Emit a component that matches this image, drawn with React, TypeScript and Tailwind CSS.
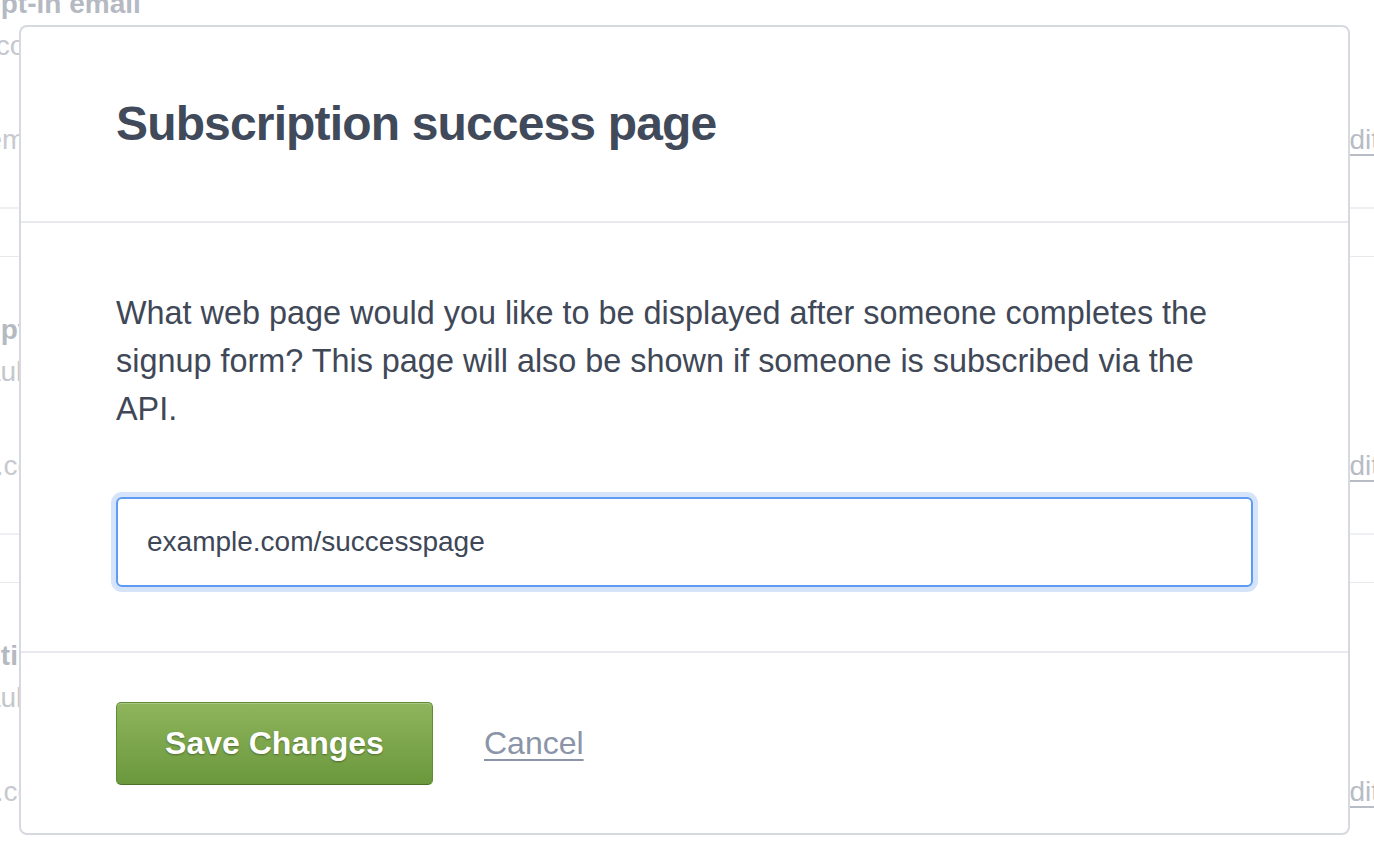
/**
 * Subscription success page — edit modal laid over the list settings page.
 * The settings rows behind are faded; only their edges show round the modal.
 */

const rows = [
  {
    title: "Double opt-in email",
    description: "Sent for confirmation of new subscribers to your list.",
    value: "Default email template",
  },
  {
    title: "Double opt-in confirmation page",
    description: "The default page shown after someone confirms their email.",
    value: "example.com/confirmed",
  },
  {
    title: "Subscription success page",
    description: "The default page shown after someone completes the form.",
    value: "example.com/successpage",
  },
];

function SettingsRow({
  title,
  description,
  value,
}: {
  title: string;
  description: string;
  value: string;
}) {
  return (
    <div className="pt-[53px] pb-[47px]">
      <h3 className="-ml-[9px] text-[28px] leading-[40px] font-bold text-[#b5b9c2]">
        {title}
      </h3>
      <p className="mt-[2px] text-[28px] leading-[40px] text-[#c4c7cd]">
        {description}
      </p>
      <div className="mt-[54px] flex items-center justify-between text-[28px] leading-[40px]">
        <span className="text-[#c6c9cf]">{value}</span>
        <a href="#" className="text-[#b8bcc5] underline underline-offset-[5px]">
          Edit
        </a>
      </div>
    </div>
  );
}

export default function App() {
  return (
    <div className="relative h-[846px] w-full overflow-hidden bg-white font-['Liberation_Sans',Arial,sans-serif]">
      {/* page behind the modal */}
      <div className="-mt-[69px] -ml-[110px] -mr-[5px]">
        <SettingsRow {...rows[0]} />
        <div className="h-[50px] border-t-2 border-b border-t-[#eef0f3] border-b-[#e7e9ed]" />
        <SettingsRow {...rows[1]} />
        <div className="h-[50px] border-t-2 border-b border-t-[#eef0f3] border-b-[#e7e9ed]" />
        <SettingsRow {...rows[2]} />
      </div>

      {/* modal */}
      <div className="absolute left-[19px] top-[25px] flex h-[810px] w-[1331px] flex-col rounded-[8px] border-2 border-[#d6d9df] bg-white">
        <div className="flex h-[196px] shrink-0 items-center border-b-2 border-[#e8eaed] px-[95px]">
          <h2 className="text-[48px] font-bold tracking-[-0.85px] text-[#414a5a]">
            Subscription success page
          </h2>
        </div>

        <div className="px-[95px] pt-[66px] pb-[64px]">
          <p className="max-w-[1100px] text-[32.4px] leading-[48px] text-[#404857]">
            What web page would you like to be displayed after someone completes
            the signup form? This page will also be shown if someone is
            subscribed via the API.
          </p>
          <input
            type="text"
            defaultValue="example.com/successpage"
            className="mt-[64px] block h-[90px] w-full rounded-[6px] border-2 border-[#5d9cf0] bg-white px-[29px] text-[28px] text-[#3e4757] shadow-[0_0_0_5px_#d5e4fb] outline-none"
          />
        </div>

        <div className="flex flex-1 items-center gap-[51px] border-t-2 border-[#e8eaed] px-[95px]">
          <button
            type="button"
            className="h-[83px] w-[317px] rounded-[5px] border border-[#5f8b34] border-b-[#4a7326] bg-gradient-to-b from-[#8fb55c] to-[#6b983c] text-[32px] font-bold text-white shadow-[inset_0_1px_0_rgba(255,255,255,0.25)] [text-shadow:0_1px_2px_rgba(0,0,0,0.35)]"
          >
            Save Changes
          </button>
          <a
            href="#"
            className="text-[32px] text-[#8b94a8] underline decoration-2 underline-offset-[5px]"
          >
            Cancel
          </a>
        </div>
      </div>
    </div>
  );
}
